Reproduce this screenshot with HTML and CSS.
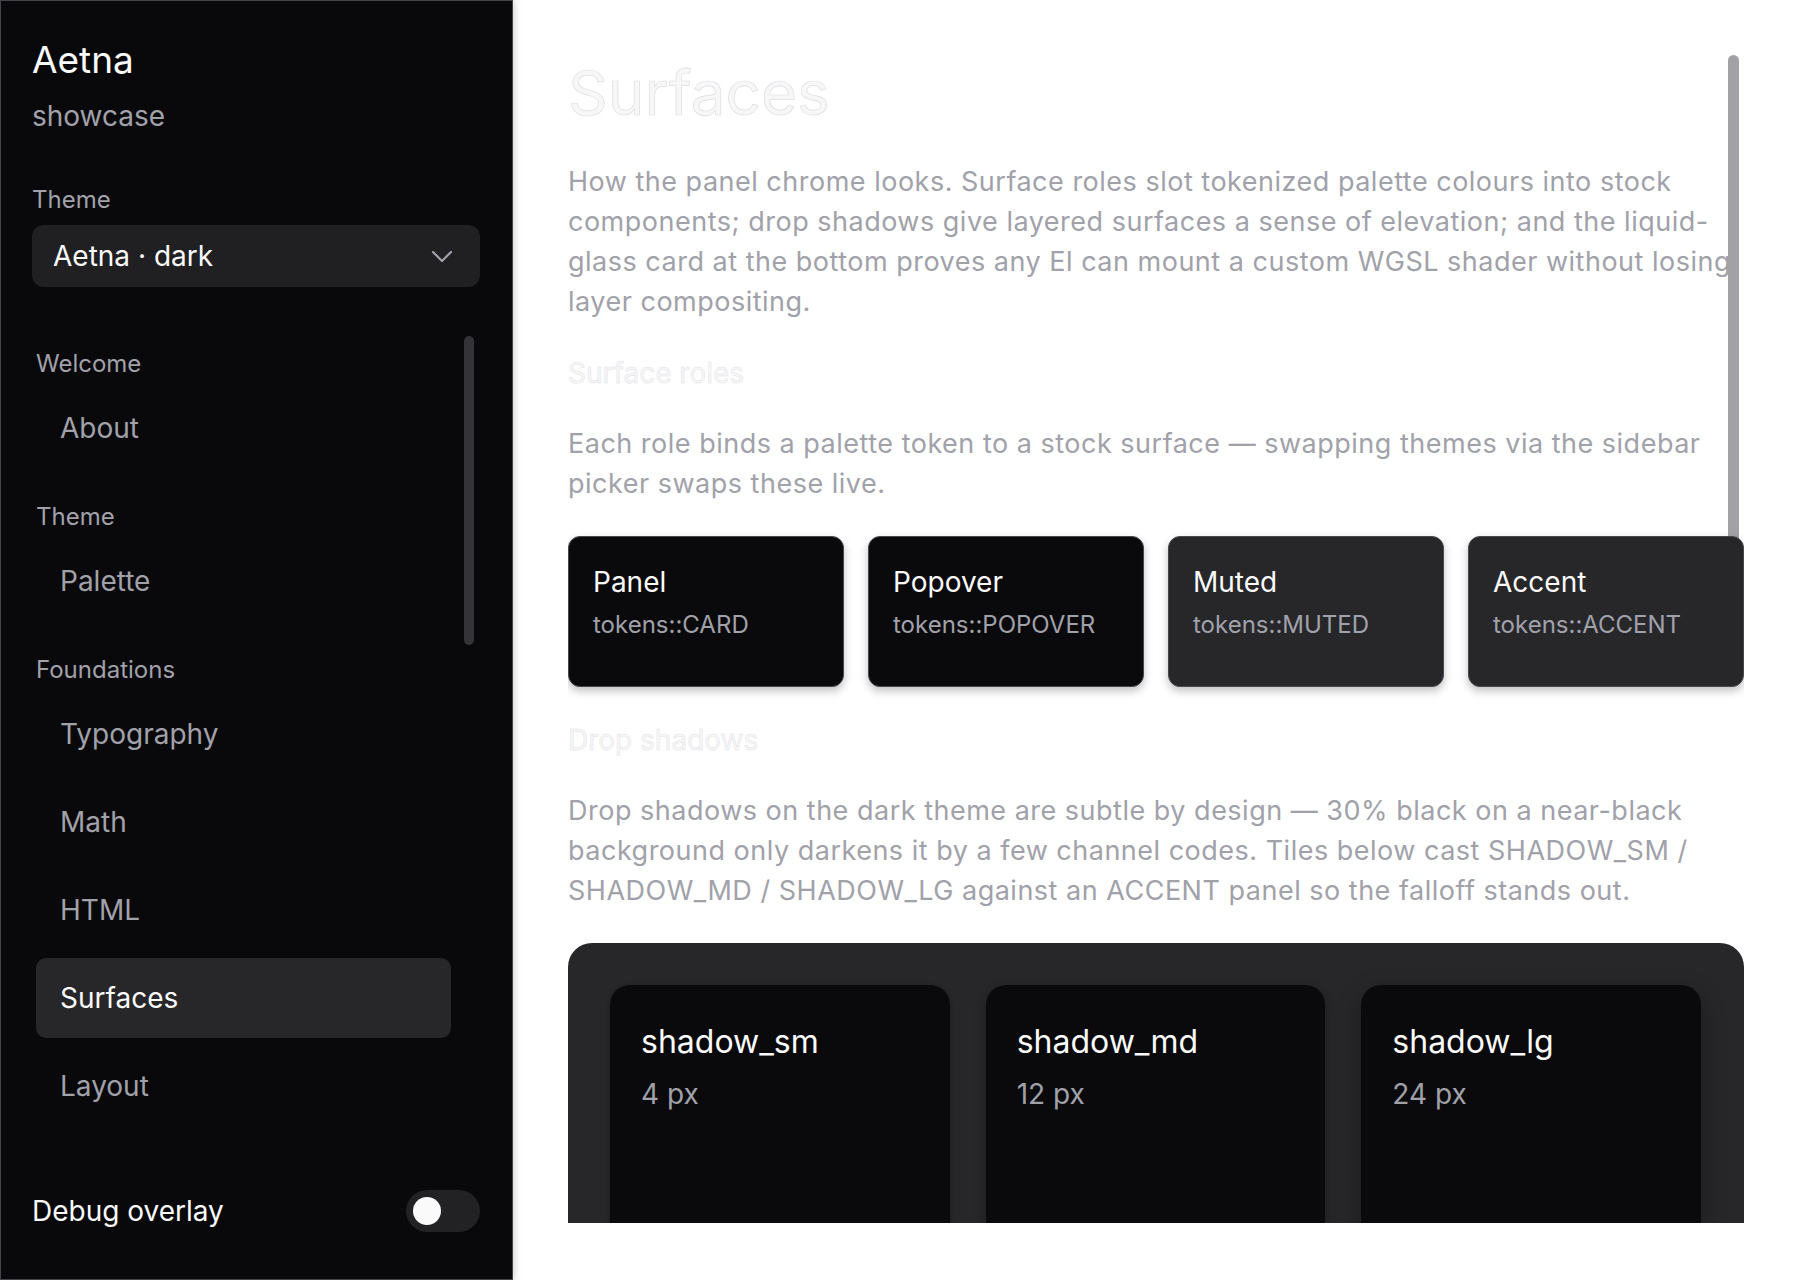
FILE: index.html
```html
<!DOCTYPE html>
<html lang="en">
<head>
  <meta charset="UTF-8" />
  <meta name="viewport" content="width=device-width, initial-scale=1.0"/>
  <title>Aetna showcase · Surfaces</title>
  <link rel="stylesheet" href="styles.css">
</head>
<body>
  <aside class="sidebar">
    <div class="brand">Aetna</div>
    <div class="brand-sub">showcase</div>

    <div class="field-label">Theme</div>
    <div class="select">
      <span>Aetna · dark</span>
      <svg width="22" height="13" viewBox="0 0 22 13" fill="none">
        <polyline points="2,2 11,11 20,2" stroke="#a1a1aa" stroke-width="2.2" stroke-linecap="round" stroke-linejoin="round"/>
      </svg>
    </div>

    <nav class="nav">
      <div class="nav-thumb"></div>

      <div class="nav-group">
        <div class="group-label">Welcome</div>
        <div class="nav-item">About</div>
      </div>

      <div class="nav-group">
        <div class="group-label">Theme</div>
        <div class="nav-item">Palette</div>
      </div>

      <div class="nav-group">
        <div class="group-label">Foundations</div>
        <div class="nav-item">Typography</div>
        <div class="nav-item">Math</div>
        <div class="nav-item">HTML</div>
        <div class="nav-item active">Surfaces</div>
        <div class="nav-item">Layout</div>
      </div>
    </nav>

    <div class="debug-row">
      <span>Debug overlay</span>
      <div class="toggle"><div class="knob"></div></div>
    </div>
  </aside>

  <main class="main">
    <div class="scroll">
      <div class="scroll-thumb"></div>

      <h1>Surfaces</h1>
      <p>How the panel chrome looks. Surface roles slot tokenized palette colours into stock components; drop shadows give layered surfaces a sense of elevation; and the liquid-glass card at the bottom proves any El can mount a custom WGSL shader without losing layer compositing.</p>

      <h3>Surface roles</h3>
      <p>Each role binds a palette token to a stock surface — swapping themes via the sidebar picker swaps these live.</p>

      <div class="roles">
        <div class="role dark">
          <div class="role-title">Panel</div>
          <div class="role-token">tokens::CARD</div>
        </div>
        <div class="role dark">
          <div class="role-title">Popover</div>
          <div class="role-token">tokens::POPOVER</div>
        </div>
        <div class="role muted">
          <div class="role-title">Muted</div>
          <div class="role-token">tokens::MUTED</div>
        </div>
        <div class="role muted">
          <div class="role-title">Accent</div>
          <div class="role-token">tokens::ACCENT</div>
        </div>
      </div>

      <h3>Drop shadows</h3>
      <p>Drop shadows on the dark theme are subtle by design — 30% black on a near-black background only darkens it by a few channel codes. Tiles below cast SHADOW_SM / SHADOW_MD / SHADOW_LG against an ACCENT panel so the falloff stands out.</p>

      <div class="shadow-panel">
        <div class="tile sm">
          <div class="tile-title">shadow_sm</div>
          <div class="tile-sub">4 px</div>
        </div>
        <div class="tile md">
          <div class="tile-title">shadow_md</div>
          <div class="tile-sub">12 px</div>
        </div>
        <div class="tile lg">
          <div class="tile-title">shadow_lg</div>
          <div class="tile-sub">24 px</div>
        </div>
      </div>
    </div>
  </main>
</body>
</html>
```
FILE: styles.css
```css
html, body {
  margin: 0;
  height: 100%;
}

body {
  display: flex;
  font-family: Inter, "Noto Sans", sans-serif;
  background-color: #ffffff;
  overflow: hidden;
}

/* sidebar */

.sidebar {
  width: 513px;
  flex-shrink: 0;
  box-sizing: border-box;
  height: 100vh;
  display: flex;
  flex-direction: column;
  padding: 37px 32px 47px 31px;
  background-color: #09090b;
  border: 1px solid #45454b;
  box-shadow: 0 0 8px rgba(0, 0, 0, 0.25);
  position: relative;
  z-index: 1;
}

.brand {
  font-size: 37px;
  line-height: 44px;
  color: #fafafa;
}

.brand-sub {
  margin-top: 16px;
  font-size: 28px;
  line-height: 36px;
  color: #a1a1aa;
}

.field-label {
  margin-top: 51px;
  font-size: 24px;
  line-height: 30px;
  color: #a1a1aa;
}

.select {
  margin-top: 10px;
  height: 62px;
  box-sizing: border-box;
  display: flex;
  align-items: center;
  justify-content: space-between;
  padding: 0 27px 0 21px;
  background-color: #202023;
  border-radius: 12px;
  font-size: 28px;
  color: #fafafa;
}

.nav {
  position: relative;
  margin-top: 49px;
  padding: 13px 0 0 4px;
}

.nav-thumb {
  position: absolute;
  top: 0;
  right: 6px;
  width: 10px;
  height: 309px;
  border-radius: 5px;
  background-color: #333338;
}

.nav-group + .nav-group {
  margin-top: 34px;
}

.group-label {
  font-size: 24px;
  line-height: 30px;
  color: #a1a1aa;
  margin-bottom: 9px;
}

.nav-item {
  width: 415px;
  height: 80px;
  box-sizing: border-box;
  display: flex;
  align-items: center;
  padding-left: 24px;
  border-radius: 10px;
  font-size: 28px;
  color: #a1a1aa;
}

.nav-item + .nav-item {
  margin-top: 8px;
}

.nav-item.active {
  background-color: #27272a;
  color: #fafafa;
}

.debug-row {
  margin-top: auto;
  display: flex;
  align-items: center;
  justify-content: space-between;
  font-size: 28px;
  color: #fafafa;
}

.toggle {
  width: 74px;
  height: 42px;
  border-radius: 21px;
  background-color: #222225;
  display: flex;
  align-items: center;
  padding-left: 7px;
  box-sizing: border-box;
}

.knob {
  width: 28px;
  height: 28px;
  border-radius: 50%;
  background-color: #fafafa;
}

/* main */

.main {
  flex: 1;
  display: flex;
  flex-direction: column;
  padding: 0 56px 57px 55px;
  min-width: 0;
}

.scroll {
  flex: 1;
  position: relative;
  overflow: hidden;
  padding-top: 53px;
}

.scroll-thumb {
  position: absolute;
  top: 55px;
  right: 5px;
  width: 11px;
  height: 617px;
  border-radius: 6px;
  background-color: #a1a1a6;
  z-index: 1;
}

h1, h3 {
  margin: 0;
  font-weight: 400;
  color: #f7f7f8;
  -webkit-text-stroke: 0.7px #dedee2;
}

h1 {
  font-size: 62px;
  line-height: 80px;
}

h3 {
  margin-top: 33px;
  font-size: 28px;
  line-height: 36px;
  -webkit-text-stroke: 0.5px #e2e2e6;
}

p {
  margin: 29px 0 0;
  font-size: 27px;
  line-height: 40px;
  letter-spacing: 0.5px;
  color: #a1a1aa;
}

h3 + p {
  margin-top: 33px;
}

.roles {
  margin-top: 32px;
  display: grid;
  grid-template-columns: repeat(4, 1fr);
  gap: 24px;
}

.role {
  position: relative;
  z-index: 2;
  height: 151px;
  box-sizing: border-box;
  padding: 27px 24px;
  border: 1px solid #48484e;
  border-radius: 12px;
  box-shadow: 0 4px 8px rgba(0, 0, 0, 0.25);
}

.role.dark {
  background-color: #0a0a0c;
}

.role.muted {
  background-color: #27272a;
}

.role-title {
  font-size: 28px;
  line-height: 36px;
  color: #fafafa;
}

.role-token {
  margin-top: 9px;
  font-size: 24px;
  line-height: 32px;
  color: #a1a1aa;
}

.roles + h3 {
  margin-top: 35px;
}

.shadow-panel {
  margin-top: 32px;
  display: grid;
  grid-template-columns: repeat(3, 1fr);
  gap: 36px;
  padding: 42px 43px 40px 42px;
  background-color: #27272a;
  border-radius: 24px;
}

.tile {
  height: 280px;
  box-sizing: border-box;
  padding: 37px 31px;
  background-color: #0a0a0c;
  border-radius: 20px;
}

.tile.sm {
  box-shadow: 0 1px 4px rgba(0, 0, 0, 0.3);
}

.tile.md {
  box-shadow: 0 4px 12px rgba(0, 0, 0, 0.3);
}

.tile.lg {
  box-shadow: 0 8px 24px rgba(0, 0, 0, 0.3);
}

.tile-title {
  font-size: 32px;
  line-height: 40px;
  color: #fafafa;
}

.tile-sub {
  margin-top: 14px;
  font-size: 28px;
  line-height: 36px;
  color: #a1a1aa;
}
```
